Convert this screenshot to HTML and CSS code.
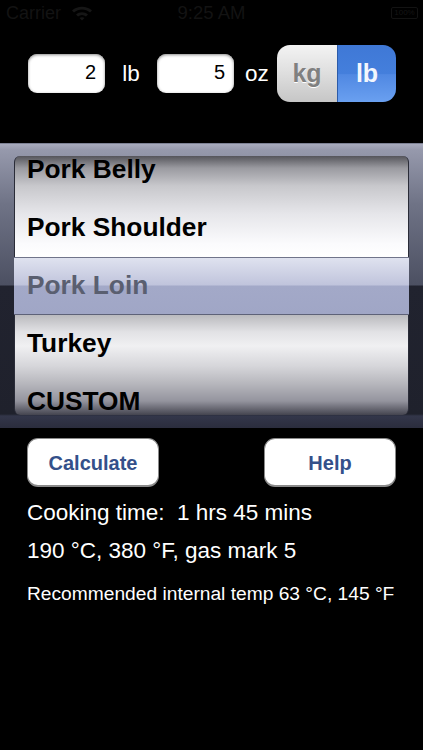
FILE: index.html
```html
<!DOCTYPE html>
<html lang="en">
<head>
<meta charset="utf-8">
<title>Roast Calculator</title>
<link rel="stylesheet" href="styles.css">
</head>
<body>
<div class="screen">
  <div class="status">
    <div class="status-left">
      <span>Carrier</span>
      <svg class="wifi" width="22" height="16" viewBox="0 0 22 16"><path d="M1 5.500C6.500.5 15.500.5 21 5.500L19 7.500C14.500 3.500 7.500 3.500 3 7.500ZM5 9.500C8.500 6.500 13.500 6.500 17 9.500L15 11.500C12.500 9.500 9.500 9.500 7 11.500ZM8.500 13C10 12 12 12 13.500 13L11 15.500Z" fill="#161616"/></svg>
    </div>
    <span class="status-time">9:25 AM</span>
    <div class="battery"><span class="battery-fill">100%</span></div>
  </div>

  <div class="controls">
    <div class="field">2</div>
    <span class="unit unit-lb">lb</span>
    <div class="field">5</div>
    <span class="unit unit-oz">oz</span>
    <div class="segmented">
      <div class="seg seg-off">kg</div>
      <div class="seg seg-on">lb</div>
    </div>
  </div>

  <div class="picker">
    <div class="wheel">
      <div class="wheel-list">
        <div class="row">Pork Belly</div>
        <div class="row">Pork Shoulder</div>
        <div class="row row-selected">Pork Loin</div>
        <div class="row">Turkey</div>
        <div class="row">CUSTOM</div>
      </div>
    </div>
    <div class="band"></div>
  </div>

  <div class="buttons">
    <div class="btn btn-calc">Calculate</div>
    <div class="btn btn-help">Help</div>
  </div>

  <p class="line line-time">Cooking time:&nbsp; 1 hrs 45 mins</p>
  <p class="line line-temp">190 °C, 380 °F, gas mark 5</p>
  <p class="note">Recommended internal temp 63 °C, 145 °F</p>
</div>
</body>
</html>
```
FILE: styles.css
```css
* { box-sizing: border-box; }
html, body { margin: 0; padding: 0; background: #000; }
body { width: 423px; height: 750px; overflow: hidden; font-family: "Liberation Sans", Arial, sans-serif; color: #fff; }
.screen { width: 423px; height: 750px; background: #000; }

.status { height: 27px; display: flex; align-items: center; justify-content: space-between; padding: 0 5px 1px 6px; color: #131313; font-size: 18px; position: relative; }
.status-left { display: flex; align-items: center; gap: 10px; }
.wifi { display: block; }
.status-time { position: absolute; left: 0; right: 0; text-align: center; font-size: 18.500px; }
.battery { width: 27px; height: 12px; border: 1px solid #131313; border-radius: 2px; display: flex; align-items: center; justify-content: center; }
.battery-fill { font-size: 8px; line-height: 1; color: #151515; }

.controls { height: 116px; display: flex; align-items: center; padding: 0 0 23px 28px; }
.field { width: 77px; height: 39px; background: #fff; border-radius: 9px; box-shadow: inset 0 1px 3px #8a8a8a; color: #000; font-size: 20px; line-height: 37px; text-align: right; padding-right: 9px; }
.unit { font-size: 22.500px; color: #fff; margin-top: 1px; }
.unit-lb { width: 52px; text-align: center; }
.unit-oz { width: 40px; text-align: center; margin-left: 3px; }
.segmented { width: 119px; height: 57px; display: flex; border-radius: 13px; overflow: hidden; font-size: 25px; font-weight: 700; margin-top: -1px; }
.seg { display: flex; align-items: center; justify-content: center; }
.seg-off { width: 60px; background: linear-gradient(#f3f3f3, #dedede 50%, #c6c6c6); color: #808080; text-shadow: 0 1px 0 #fff; }
.seg-on { width: 59px; background: linear-gradient(#3f78d6 0, #447fdc 50%, #5088e2 52%, #6aa0f0 100%); color: #f2f6fd; border-left: 1px solid #2c5ba8; }

.picker { position: relative; height: 285px; padding: 12px 14px 13px; border-top: 1px solid #7d8194;
  background: linear-gradient(#a8abbd 0, #9699ac 6px, #6f7386 60px, #4c5062 141px, #21232f 142px, #1f212c 270px, #33364a 272px, #2a2c3c 285px); }
.wheel { height: 259px; overflow: hidden; border-radius: 6px; border-left: 1px solid #2a2c38; border-right: 1px solid #2a2c38;
  background: linear-gradient(#55555b 0, #9a9aa0 12px, #c8c8cc 30px, #e6e6ea 58px, #fbfbfd 88px, #fff 101px, #b8b8bc 158px, #e2e2e5 176px, #f0f0f2 190px, #d6d6da 210px, #b6b6bc 228px, #94949e 245px, #44444f 259px); }
.wheel-list { position: relative; z-index: 2; margin-top: -16px; padding-left: 12px; }
.row { height: 58px; line-height: 58px; font-size: 26.300px; font-weight: 700; color: #000; white-space: nowrap; }
.row-selected { color: #5a5f70; }
.band { position: absolute; z-index: 1; left: 14px; right: 14px; top: 113px; height: 58px; border-top: 1px solid #70748a; border-bottom: 1px solid #5e6278;
  background: linear-gradient(#dfe2ef 0, #c0c4dc 27px, #a3a9c8 28px, #a0a6c6 100%); }

.buttons { display: flex; justify-content: space-between; padding: 10px 27px 0; }
.btn { width: 132px; height: 49px; background: #fff; border: 1px solid #8a8a8a; border-bottom: 2px solid #8a8a8a; border-radius: 11px; color: #34508a; font-size: 20px; font-weight: 700; line-height: 48px; text-align: center; }
.line { margin: 0; padding-left: 27px; font-size: 22.500px; color: #fff; }
.line-time { line-height: 26px; margin-top: 13px; }
.line-temp { line-height: 26px; margin-top: 12px; }
.note { margin: 19px 0 0; padding-left: 27px; font-size: 19.200px; line-height: 22px; color: #fff; white-space: nowrap; }
```
